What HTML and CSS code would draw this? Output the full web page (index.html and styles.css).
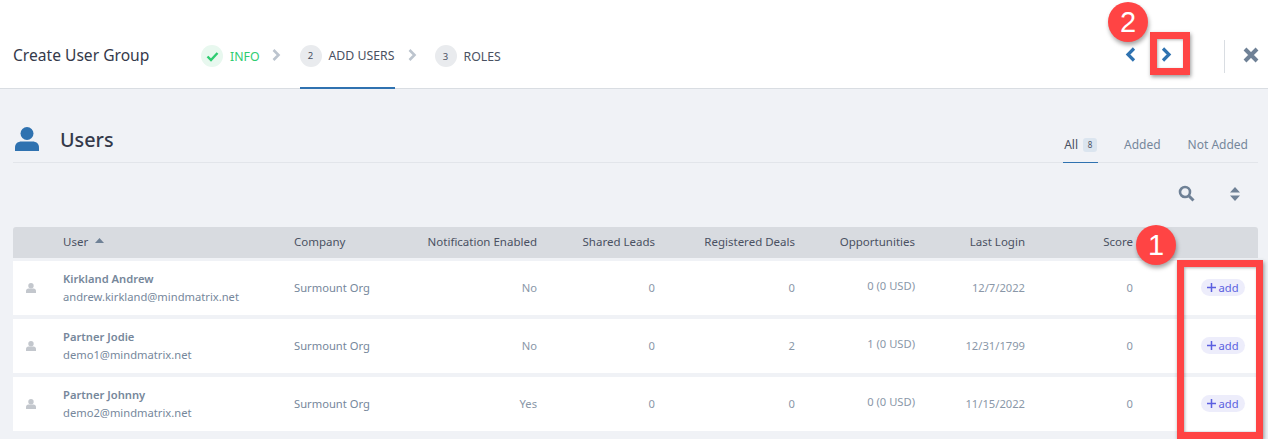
FILE: index.html
```html
<!DOCTYPE html>
<html lang="en">
<head>
<meta charset="utf-8">
<title>Create User Group</title>
<link rel="stylesheet" href="styles.css">
</head>
<body>
<header class="topbar">
  <h1 class="page-title">Create User Group</h1>
  <nav class="steps">
    <div class="step step-done">
      <span class="step-dot dot-done"><svg width="13" height="11" viewBox="0 0 13 11"><path d="M1.500 5.500l3.500 3.500 6.500-7" fill="none" stroke="#2ecc71" stroke-width="2.400"/></svg></span>
      <span>INFO</span>
    </div>
    <svg class="step-chevron" width="9" height="12" viewBox="0 0 9 12"><path d="M1.500 1l5 5-5 5" fill="none" stroke="#bcc4ce" stroke-width="2.600"/></svg>
    <div class="step step-active">
      <span class="step-dot">2</span>
      <span>ADD USERS</span>
    </div>
    <svg class="step-chevron" width="9" height="12" viewBox="0 0 9 12"><path d="M1.500 1l5 5-5 5" fill="none" stroke="#bcc4ce" stroke-width="2.600"/></svg>
    <div class="step">
      <span class="step-dot">3</span>
      <span>ROLES</span>
    </div>
  </nav>
  <div class="top-actions">
    <svg class="pager" width="11" height="15" viewBox="0 0 11 15"><path d="M9 1.500L3 7.500l6 6" fill="none" stroke="#2f72b0" stroke-width="3.200"/></svg>
    <svg class="pager" width="11" height="15" viewBox="0 0 11 15"><path d="M2 1.500l6 6-6 6" fill="none" stroke="#2f72b0" stroke-width="3.200"/></svg>
    <span class="top-divider"></span>
    <svg class="close" width="16" height="16" viewBox="0 0 16 16"><path d="M2 2l12 12M14 2L2 14" fill="none" stroke="#6f8196" stroke-width="4"/></svg>
  </div>
</header>

<main class="content">
  <section class="section-head">
    <div class="section-title">
      <svg width="24" height="24" viewBox="0 0 24 24"><circle cx="12" cy="6.500" r="6.500" fill="#2f72b0"/><path d="M0 24v-3.500C0 16.500 3 14.500 6.500 14.500h11c3.500 0 6.500 2 6.500 6V24z" fill="#2f72b0"/></svg>
      <h2>Users</h2>
    </div>
    <div class="filters">
      <span class="filter filter-on">All <span class="count">8</span></span>
      <span class="filter">Added</span>
      <span class="filter">Not Added</span>
    </div>
  </section>

  <div class="tools">
    <svg width="17" height="17" viewBox="0 0 17 17"><circle cx="7" cy="7" r="5" fill="none" stroke="#6f8196" stroke-width="2.600"/><path d="M10.500 10.500l5 5" stroke="#6f8196" stroke-width="3"/></svg>
    <svg width="10" height="14" viewBox="0 0 10 14"><path d="M5 0l5 5.500H0zM5 14L0 8.500h10z" fill="#6f8196"/></svg>
  </div>

  <div class="table">
    <div class="row row-head">
      <span></span>
      <span class="cell-user-head">User <svg width="9" height="5" viewBox="0 0 9 5"><path d="M4.500 0L9 5H0z" fill="#6f8196"/></svg></span>
      <span>Company</span>
      <span class="num">Notification Enabled</span>
      <span class="num">Shared Leads</span>
      <span class="num">Registered Deals</span>
      <span class="num">Opportunities</span>
      <span class="num">Last Login</span>
      <span class="num">Score</span>
      <span></span>
    </div>

    <div class="row">
      <svg class="avatar" width="10" height="10" viewBox="0 0 10 10"><circle cx="5" cy="2.700" r="2.700" fill="#c3c7cd"/><path d="M0 10V8c0-1.500 1-2.500 2.500-2.500h5C9 5.500 10 6.500 10 8v2z" fill="#c3c7cd"/></svg>
      <div class="user"><strong>Kirkland Andrew</strong><span>andrew.kirkland@mindmatrix.net</span></div>
      <span>Surmount Org</span>
      <span class="num muted">No</span>
      <span class="num muted">0</span>
      <span class="num muted">0</span>
      <span class="num muted raised">0 (0 USD)</span>
      <span class="num muted">12/7/2022</span>
      <span class="num muted">0</span>
      <a class="add"><svg width="9" height="9" viewBox="0 0 9 9"><path d="M4.500 0v9M0 4.500h9" stroke="#5b5fe0" stroke-width="1.500"/></svg>add</a>
    </div>

    <div class="row">
      <svg class="avatar" width="10" height="10" viewBox="0 0 10 10"><circle cx="5" cy="2.700" r="2.700" fill="#c3c7cd"/><path d="M0 10V8c0-1.500 1-2.500 2.500-2.500h5C9 5.500 10 6.500 10 8v2z" fill="#c3c7cd"/></svg>
      <div class="user"><strong>Partner Jodie</strong><span>demo1@mindmatrix.net</span></div>
      <span>Surmount Org</span>
      <span class="num muted">No</span>
      <span class="num muted">0</span>
      <span class="num muted">2</span>
      <span class="num muted raised">1 (0 USD)</span>
      <span class="num muted">12/31/1799</span>
      <span class="num muted">0</span>
      <a class="add"><svg width="9" height="9" viewBox="0 0 9 9"><path d="M4.500 0v9M0 4.500h9" stroke="#5b5fe0" stroke-width="1.500"/></svg>add</a>
    </div>

    <div class="row">
      <svg class="avatar" width="10" height="10" viewBox="0 0 10 10"><circle cx="5" cy="2.700" r="2.700" fill="#c3c7cd"/><path d="M0 10V8c0-1.500 1-2.500 2.500-2.500h5C9 5.500 10 6.500 10 8v2z" fill="#c3c7cd"/></svg>
      <div class="user"><strong>Partner Johnny</strong><span>demo2@mindmatrix.net</span></div>
      <span>Surmount Org</span>
      <span class="num muted">Yes</span>
      <span class="num muted">0</span>
      <span class="num muted">0</span>
      <span class="num muted raised">0 (0 USD)</span>
      <span class="num muted">11/15/2022</span>
      <span class="num muted">0</span>
      <a class="add"><svg width="9" height="9" viewBox="0 0 9 9"><path d="M4.500 0v9M0 4.500h9" stroke="#5b5fe0" stroke-width="1.500"/></svg>add</a>
    </div>
  </div>
</main>

<div class="callout callout-box box-next"></div>
<div class="callout callout-box box-add"></div>
<div class="callout badge badge-two">2</div>
<div class="callout badge badge-one">1</div>
</body>
</html>
```
FILE: styles.css
```css
* { box-sizing: border-box; }

html, body {
  margin: 0;
  height: 439px;
  overflow: hidden;
}

body {
  position: relative;
  background: #f0f2f6;
  font-family: "Noto Sans", "Open Sans", sans-serif;
  font-size: 11.2px;
  color: #76879b;
}

.topbar {
  display: flex;
  align-items: center;
  height: 89px;
  padding: 22px 0 0 13px;
  background: #fff;
  border-bottom: 1px solid #d9dde2;
}

.page-title {
  width: 188px;
  margin: 0;
  font-size: 15.600px;
  font-weight: 400;
  color: #34394a;
}

.steps {
  display: flex;
  align-items: center;
  align-self: stretch;
  font-size: 12.300px;
  color: #4a5162;
}

.step {
  display: flex;
  align-items: center;
  gap: 7px;
  padding-top: 2px;
}

.step-done { color: #2ecc71; }

.step-active {
  align-self: stretch;
  margin-bottom: -1px;
  border-bottom: 2px solid #2f72b0;
}

.step-dot {
  display: flex;
  align-items: center;
  justify-content: center;
  width: 22px;
  height: 22px;
  border-radius: 50%;
  background: #e9ebee;
  font-size: 9.500px;
  color: #4a5162;
}

.dot-done { background: #e8f8ef; }

.step-chevron { margin: 0 13px; }

.step-done + .step-chevron { margin: 0 19px 0 12px; }
.step-active + .step-chevron { margin-right: 18px; }

.top-actions {
  display: flex;
  align-items: center;
  margin-left: auto;
  padding-right: 9px;
}

.pager { margin-right: 25px; transform: translateY(-1px); }
.pager + .pager { margin-right: 52px; }

.top-divider {
  width: 1px;
  height: 33px;
  margin-right: 18px;
  background: #d9dde2;
  transform: translateY(1px);
}

.content { padding: 0 10px 0 13px; }

.section-head {
  display: flex;
  justify-content: space-between;
  height: 74px;
  border-bottom: 1px solid #e2e5ea;
}

.section-title {
  display: flex;
  align-items: center;
  gap: 21px;
  padding: 27px 0 0 2px;
}

.section-title h2 {
  margin: 0;
  font-size: 19.800px;
  font-weight: 500;
  color: #34394a;
}

.filters {
  display: flex;
  align-items: flex-end;
  gap: 25px;
  padding-right: 9px;
  font-size: 12px;
}

.filter {
  display: flex;
  align-items: center;
  gap: 5px;
  height: 27px;
  padding: 0 1px 9px;
  color: #76879b;
}

.filter-on {
  color: #4a5162;
  border-bottom: 1px solid #2f72b0;
  margin-bottom: -1px;
}

.count {
  display: flex;
  align-items: center;
  justify-content: center;
  width: 14px;
  height: 14px;
  border-radius: 3px;
  background: #dbe5ef;
  font-size: 8px;
  color: #4a5162;
}

.tools {
  display: flex;
  justify-content: flex-end;
  align-items: center;
  gap: 35px;
  height: 64px;
  padding: 0 18px 3px 0;
}

.table {
  display: flex;
  flex-direction: column;
  gap: 4px;
}

.row {
  display: grid;
  grid-template-columns: 50px 231px 100px 143px 118px 140px 120px 110px 108px 125px;
  align-items: center;
  height: 54px;
  padding-bottom: 2px;
  background: #fff;
}

.row-head {
  height: 31px;
  margin-bottom: -1px;
  border-radius: 3px 3px 0 0;
  background: #d8dbe0;
  font-size: 11.500px;
  color: #4a5162;
}

.num { text-align: right; }
.muted { color: #8a97a8; }
.raised { padding-bottom: 4px; }

.cell-user-head svg { margin: 0 0 3px 4px; }

.avatar { margin-left: 13px; transform: translateY(1px); }

.user {
  display: flex;
  flex-direction: column;
  gap: 3px;
}

.user strong { font-weight: 600; }

.add {
  justify-self: end;
  display: flex;
  align-items: center;
  justify-content: center;
  gap: 2px;
  width: 44px;
  height: 17px;
  margin-right: 13px;
  border-radius: 9px;
  background: #ededfb;
  color: #5b5fe0;
}

.callout { position: absolute; }

.callout-box {
  border: 7px solid #ff4444;
  box-shadow: 1px 2px 4px rgba(0, 0, 0, 0.4), inset 1px 1px 3px rgba(0, 0, 0, 0.3);
}

.box-next { left: 1150px; top: 32px; width: 40px; height: 43px; }
.box-add { left: 1177px; top: 260px; width: 86px; height: 179px; }

.badge {
  display: flex;
  align-items: center;
  justify-content: center;
  width: 40px;
  height: 40px;
  border-radius: 50%;
  background: #ff4444;
  box-shadow: 1px 3px 4px rgba(0, 0, 0, 0.35);
  font-family: "Liberation Sans", Arial, sans-serif;
  font-size: 29px;
  color: #fff;
}

.badge-two { left: 1108px; top: 2px; }
.badge-one { left: 1136px; top: 225px; }
```
